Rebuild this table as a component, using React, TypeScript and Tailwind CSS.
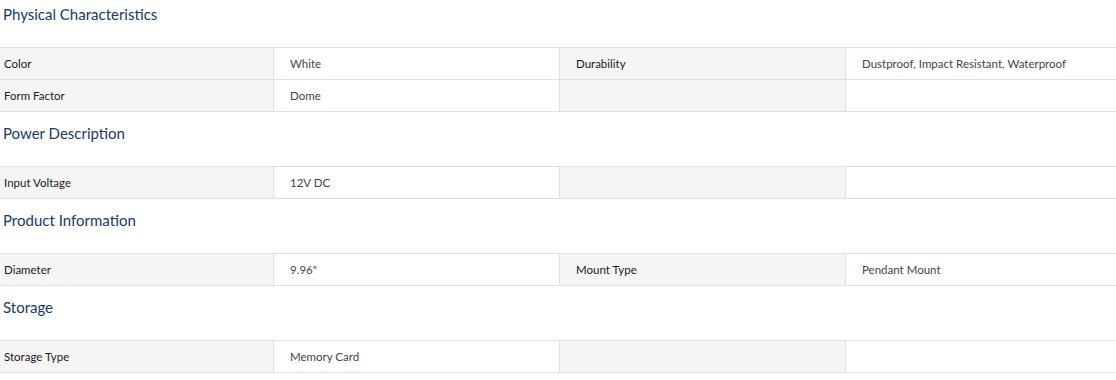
import React from "react";

type Row = [string, string, string, string];

const sections: { title: string; rows: Row[] }[] = [
  {
    title: "Physical Characteristics",
    rows: [
      ["Color", "White", "Durability", "Dustproof, Impact Resistant, Waterproof"],
      ["Form Factor", "Dome", "", ""],
    ],
  },
  { title: "Power Description", rows: [["Input Voltage", "12V DC", "", ""]] },
  {
    title: "Product Information",
    rows: [["Diameter", "9.96\"", "Mount Type", "Pendant Mount"]],
  },
  { title: "Storage", rows: [["Storage Type", "Memory Card", "", ""]] },
];

function SpecRow({ row }: { row: Row }) {
  return (
    <div className="grid grid-cols-[274px_286px_286px_1fr] border-b border-[#e0e0e0] h-[32px] text-[11.5px]">
      <div className="bg-[#f5f5f5] border-r border-[#e0e0e0] pl-[4px] flex items-center text-[#1a1a1a]">
        {row[0]}
      </div>
      <div className="border-r border-[#e0e0e0] pl-[16px] flex items-center text-[#444]">
        {row[1]}
      </div>
      <div className="bg-[#f5f5f5] border-r border-[#e0e0e0] pl-[16px] flex items-center text-[#1a1a1a]">
        {row[2]}
      </div>
      <div className="pl-[16px] flex items-center text-[#444]">{row[3]}</div>
    </div>
  );
}

export default function App() {
  return (
    <div
      className="w-[1116px] h-[380px] overflow-hidden bg-white"
      style={{ fontFamily: "Lato, 'Noto Sans', sans-serif" }}
    >
      {sections.map((s, i) => (
        <section key={s.title}>
          <h3
            className={
              i === 0
                ? "pt-[4px] h-[47px] pl-[3px] text-[15px] leading-[20px] text-[#163a6b]"
                : "pt-[11px] h-[54px] pl-[3px] text-[15px] leading-[20px] text-[#163a6b]"
            }
          >
            {s.title}
          </h3>
          <div className="border-t border-[#e0e0e0]">
            {s.rows.map((r, j) => (
              <SpecRow key={j} row={r} />
            ))}
          </div>
        </section>
      ))}
    </div>
  );
}
